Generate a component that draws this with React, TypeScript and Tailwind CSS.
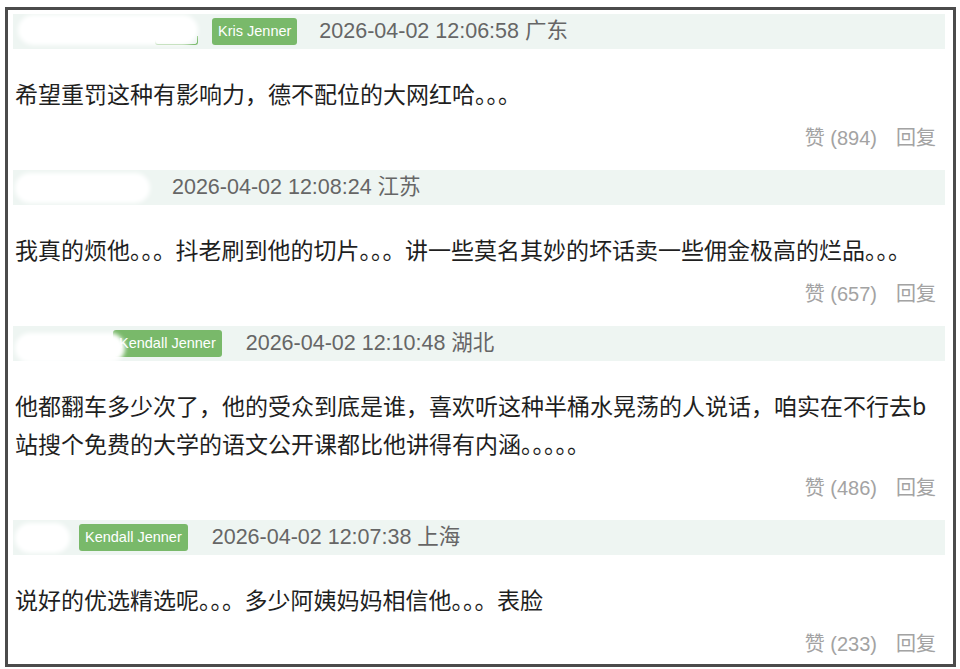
import React from "react";

const BADGE = "inline-flex items-center h-[27px] px-[6px] rounded-[3px] bg-[#79b96a] text-white text-[14.5px] font-['Liberation_Sans','Noto_Sans',sans-serif] leading-none";

function Dots({ n, gap = false }: { n: number; gap?: boolean }) {
  return (
    <span className={"[font-feature-settings:'halt'] " + (gap ? "mr-[11px]" : "")}>
      {"。".repeat(n)}
    </span>
  );
}

function Blob({ w, className = "" }: { w: number; className?: string }) {
  return (
    <div
      className={"h-[30px] bg-white rounded-full blur-[2px] shrink-0 " + className}
      style={{ width: w }}
    />
  );
}

function Header({ children, time }: { children: React.ReactNode; time: string }) {
  return (
    <div className="h-[35px] bg-[#eef5f2] flex items-center">
      {children}
      <span className="text-[21.5px] text-[#666] font-['Liberation_Sans','Noto_Sans_CJK_SC',sans-serif] leading-none">
        {time}
      </span>
    </div>
  );
}

function Actions({ likes }: { likes: number }) {
  return (
    <div className="mt-[11px] h-[30px] flex items-center justify-end pr-[9px] text-[20px] text-[#a3a3a3] font-['Liberation_Sans','Noto_Sans_CJK_SC',sans-serif] leading-none">
      <span>赞 ({likes})</span>
      <span className="ml-[19px]">回复</span>
    </div>
  );
}

const BODY = "mt-[25px] pl-[2px] text-[23px] leading-[38px] text-[#1f1f1f] font-['Noto_Sans_CJK_SC','Noto_Sans',sans-serif]";

export default function App() {
  return (
    <div className="w-[960px] h-[669px] bg-white pt-[7px] pl-[5px]">
      <div className="w-[951px] h-[660px] border-[3px] border-[#4b4b4b] pt-[4px] overflow-hidden">
        <div className="ml-[5px] w-[932px]">
          {/* Comment 1 */}
          <Header time="2026-04-02 12:06:58 广东">
            <div className="relative ml-[5px] w-[185px] h-[35px] shrink-0">
              <div className="absolute left-[137px] top-[22px] w-[43px] h-[9px] rounded-b-[3px] border-[1.5px] border-t-0 border-[#79b96a]" />
              <Blob w={180} className="absolute left-0 top-[1px] h-[28px]" />
            </div>
            <span className={BADGE + " ml-[9px] mr-[22px]"}>Kris Jenner</span>
          </Header>
          <div className={BODY}>
            希望重罚这种有影响力，德不配位的大网红哈<Dots n={3} />
          </div>
          <Actions likes={894} />

          {/* Comment 2 */}
          <div className="mt-[17px]">
            <Header time="2026-04-02 12:08:24 江苏">
              <Blob w={135} className="ml-[2px] mr-[22px] h-[26px]" />
            </Header>
          </div>
          <div className={BODY}>
            我真的烦他<Dots n={3} gap />抖老刷到他的切片<Dots n={3} gap />讲一些莫名其妙的坏话卖一些佣金极高的烂品<Dots n={3} />
          </div>
          <Actions likes={657} />

          {/* Comment 3 */}
          <div className="mt-[17px]">
            <Header time="2026-04-02 12:10:48 湖北">
              <Blob w={110} className="relative z-10 ml-[2px] -mr-[12px] h-[28px] mt-[8px]" />
              <span className={BADGE + " mr-[24px]"}>Kendall Jenner</span>
            </Header>
          </div>
          <div className={BODY + " w-[932px]"}>
            他都翻车多少次了，他的受众到底是谁，喜欢听这种半桶水晃荡的人说话，咱实在不行去b站搜个免费的大学的语文公开课都比他讲得有内涵<Dots n={5} />
          </div>
          <Actions likes={486} />

          {/* Comment 4 */}
          <div className="mt-[17px]">
            <Header time="2026-04-02 12:07:38 上海">
              <Blob w={55} className="ml-[2px] mr-[9px] h-[26px]" />
              <span className={BADGE + " mr-[24px]"}>Kendall Jenner</span>
            </Header>
          </div>
          <div className={BODY}>
            说好的优选精选呢<Dots n={3} gap />多少阿姨妈妈相信他<Dots n={3} gap />表脸
          </div>
          <Actions likes={233} />
        </div>
      </div>
    </div>
  );
}
